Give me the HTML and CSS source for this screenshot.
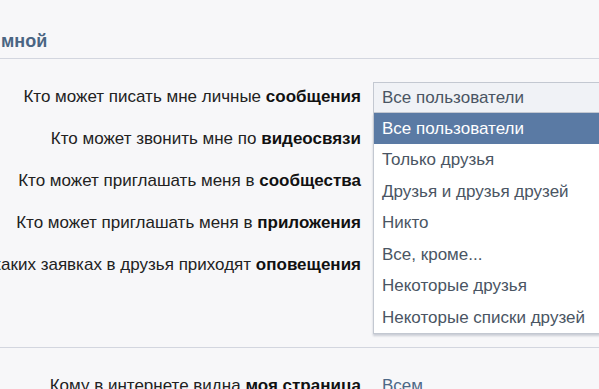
FILE: index.html
```html
<!DOCTYPE html>
<html lang="ru">
<head>
<meta charset="utf-8">
<link rel="stylesheet" href="styles.css">
</head>
<body>
<div class="page">
  <div class="head"><h2 class="title">мной</h2></div>
  <div class="section">
    <div class="row">
      <div class="label">Кто может писать мне личные <b>сообщения</b></div>
      <div class="control">
        <div class="select">Все пользователи</div>
        <ul class="menu">
          <li class="opt active">Все пользователи</li>
          <li class="opt">Только друзья</li>
          <li class="opt">Друзья и друзья друзей</li>
          <li class="opt">Никто</li>
          <li class="opt">Все, кроме...</li>
          <li class="opt">Некоторые друзья</li>
          <li class="opt">Некоторые списки друзей</li>
        </ul>
      </div>
    </div>
    <div class="row"><div class="label">Кто может звонить мне по <b>видеосвязи</b></div><div class="control"></div></div>
    <div class="row"><div class="label">Кто может приглашать меня в <b>сообщества</b></div><div class="control"></div></div>
    <div class="row"><div class="label">Кто может приглашать меня в <b>приложения</b></div><div class="control"></div></div>
    <div class="row"><div class="label">О каких заявках в друзья приходят <b>оповещения</b></div><div class="control"></div></div>
  </div>
  <div class="section second">
    <div class="row">
      <div class="label">Кому в интернете видна <b>моя страница</b></div>
      <div class="control"><span class="value">Всем</span></div>
    </div>
  </div>
</div>
</body>
</html>
```
FILE: styles.css
```css
html, body {
  margin: 0;
  padding: 0;
  background: #f7f7f9;
  overflow: hidden;
}
.page {
  width: 599px;
  height: 389px;
  overflow: hidden;
  font-family: "Liberation Sans", Arial, sans-serif;
  color: #222;
}
.head {
  box-sizing: border-box;
  height: 59px;
  border-bottom: 1px solid #d3d6df;
  display: flex;
  align-items: flex-end;
}
.title {
  margin: 0 0 6px 0;
  padding-left: 1px;
  font-size: 18px;
  font-weight: bold;
  color: #4a6583;
  line-height: 22px;
}
.section {
  padding: 17px 0 61px 0;
  border-bottom: 1px solid #d3d6df;
}
.section.second {
  border-bottom: none;
  padding: 17px 0 0 0;
}
.row {
  display: grid;
  grid-template-columns: 361px 1fr;
  column-gap: 12px;
  height: 42px;
  align-items: center;
}
.label {
  display: flex;
  justify-content: flex-end;
  gap: 0.28em;
  white-space: nowrap;
  font-size: 17px;
  color: #222;
}
.label b {
  font-weight: bold;
  color: #111;
}
.control {
  position: relative;
  height: 31px;
  display: flex;
  align-items: center;
}
.select {
  box-sizing: border-box;
  height: 31px;
  width: 260px;
  border: 1px solid #c3c8d1;
  border-right: none;
  background: #f0f2f6;
  color: #4a5563;
  font-size: 17px;
  line-height: 29px;
  padding-left: 8px;
  white-space: nowrap;
}
.menu {
  position: absolute;
  left: 0;
  top: 31px;
  width: 260px;
  margin: 0;
  padding: 0;
  list-style: none;
  background: #fff;
  border: 1px solid #c3c8d1;
  border-top: none;
  border-right: none;
  box-shadow: 0 2px 2px rgba(120, 130, 150, 0.35);
  box-sizing: border-box;
}
.opt {
  height: 31.5px;
  line-height: 31.5px;
  padding-left: 8px;
  font-size: 17px;
  color: #4a5563;
  white-space: nowrap;
}
.opt.active {
  background: #5a7aa4;
  color: #fff;
}
.value {
  padding-left: 9px;
  font-size: 17px;
  color: #4d6886;
}
```
